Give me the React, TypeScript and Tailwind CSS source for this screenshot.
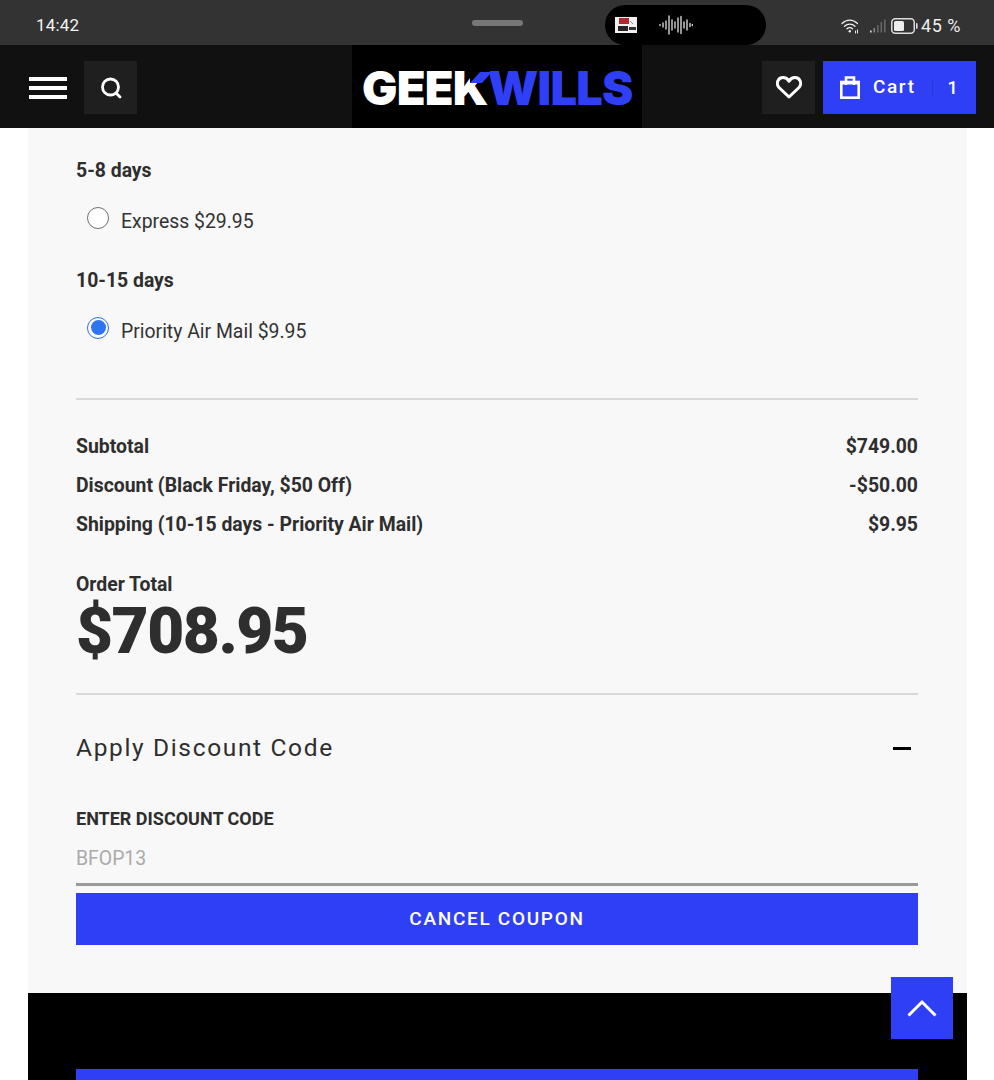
import React from "react";

const Row = ({ l, r }: { l: string; r: string }) => (
  <div className="flex h-[39px] items-center justify-between text-[19.4px] font-bold text-[#2e2e2e]">
    <span>{l}</span>
    <span>{r}</span>
  </div>
);

const Radio = ({ on, label }: { on?: boolean; label: string }) => (
  <div className="flex h-[24px] items-center pl-[11px]">
    <span
      className={
        on
          ? "flex h-[22px] w-[22px] items-center justify-center rounded-full border-[1.5px] border-[#2f6fe8] bg-white -mt-[9px]"
          : "h-[22px] w-[22px] rounded-full border-[1.5px] border-[#6f6f6f] bg-white -mt-[9px]"
      }
    >
      {on && <span className="h-[15px] w-[15px] rounded-full bg-[#2f74f0]" />}
    </span>
    <span className="ml-[12px] text-[19.4px] text-[#333]">{label}</span>
  </div>
);

export default function App() {
  return (
    <div className="relative h-[1080px] w-[994px] overflow-hidden bg-white font-['Roboto',sans-serif]">
      {/* status bar */}
      <div className="relative flex h-[45px] items-center justify-between bg-[#333333] pl-[36px] pr-[33px] pt-[6px] text-white">
        <span className="text-[17px] tracking-[0.2px] text-[#f2f2f2]">14:42</span>
        <div className="absolute left-[472px] top-[20px] h-[6px] w-[51px] rounded-full bg-[#777]" />
        <div className="absolute left-[605px] top-[5px] flex h-[40px] w-[161px] items-center rounded-full bg-black pl-[10px]">
          <svg width="22" height="16" viewBox="0 0 22 16">
            <rect width="22" height="16" fill="#f1f1f1" />
            <rect x="4" y="1" width="10" height="6" fill="#b3262c" />
            <rect x="3" y="9" width="10" height="5" fill="#2a2224" />
            <rect x="14" y="10" width="7" height="3" fill="#333" />
            <path d="M15 4l3 3" stroke="#6a8fc4" strokeWidth="1" />
          </svg>
          <svg className="ml-[22px]" width="34" height="20" viewBox="0 0 34 20" stroke="#e6e6e6" strokeWidth="1.3" strokeLinecap="round">
            <path d="M1 9.500v1M4 8v4M7 6v8M10 1v18M13 5v10M16 7v6M19 3v14M22 1.500v17M25 7v6M28 5v10M31 8.500v3M33.300 9.500v1" />
          </svg>
        </div>
        <div className="flex items-center">
          <svg width="18" height="16" viewBox="0 0 18 16" fill="none" stroke="#eee" strokeWidth="1.3" strokeLinecap="round">
            <path d="M1 5.500C5.500 1 12 1 16.500 5.500" />
            <path d="M3.500 8.200C6.500 5.300 11 5.300 14 8.200" />
            <path d="M6 10.800C7.500 9.400 10 9.400 11.500 10.800" />
            <circle cx="8.800" cy="13.300" r="1.200" fill="#eee" stroke="none" />
            <path d="M14.500 13v2M16.500 12v3" strokeWidth="1" />
          </svg>
          <svg className="ml-[11px]" width="16" height="14" viewBox="0 0 16 14" fill="#666">
            <rect x="0" y="11.500" width="1.600" height="2" fill="#ddd" />
            <rect x="3.500" y="9" width="1.600" height="4.500" fill="#888" />
            <rect x="7" y="6" width="1.600" height="7.500" />
            <rect x="10.500" y="3" width="1.600" height="10.500" />
            <rect x="14" y="0.500" width="1.600" height="13" />
          </svg>
          <svg className="ml-[5px]" width="27" height="16" viewBox="0 0 27 16" fill="none">
            <rect x="0.750" y="0.750" width="22.500" height="14.500" rx="3.500" stroke="#ddd" strokeWidth="1.500" />
            <rect x="3" y="3" width="10" height="10" rx="1.500" fill="#eee" />
            <rect x="25" y="5" width="1.600" height="6" rx="0.800" fill="#ddd" />
          </svg>
          <span className="ml-[3px] text-[18px] tracking-[0.5px] text-[#eee]">45 %</span>
        </div>
      </div>

      {/* header */}
      <header className="flex h-[83px] items-center justify-between bg-[#111111] pl-[29px] pr-[18px] pt-[2px]">
        <div className="flex items-center">
          <div className="flex w-[38px] flex-col gap-[5px]">
            <div className="h-[4px] bg-white" />
            <div className="h-[4px] bg-white" />
            <div className="h-[4px] bg-white" />
          </div>
          <button className="ml-[17px] flex h-[53px] w-[53px] items-center justify-center bg-[#1f1f1f]">
            <svg width="22" height="22" viewBox="0 0 22 22" fill="none" stroke="white" strokeWidth="2.800" strokeLinecap="round">
              <circle cx="10.500" cy="10" r="8" />
              <path d="M16.500 16.500l3.500 3.500" />
            </svg>
          </button>
        </div>
        <div className="absolute left-[352px] top-[45px] flex h-[83px] w-[290px] items-center bg-black pl-[10px] pt-[2px]">
          <div className="relative flex items-baseline text-[47px] leading-none font-black tracking-[-0.8px] font-['Inter',sans-serif]">
            <span className="text-white">GEEK</span>
            <span className="text-[#2f3ff5]">WILLS</span>
            <svg className="absolute left-[105px] top-[1px]" width="30" height="20" viewBox="0 0 30 20">
              <path d="M3 4h20v14H3z" fill="black" />
              <path d="M3 18 13 7h12L15 18z" fill="#2f3ff5" />
            </svg>
          </div>
        </div>
        <div className="flex items-center gap-[8px]">
          <button className="flex h-[53px] w-[53px] items-center justify-center bg-[#1f1f1f]">
            <svg width="26" height="23" viewBox="0 0 26 23" fill="none" stroke="white" strokeWidth="3" strokeLinejoin="round">
              <path d="M13 21 3 11.500C-.5 7.500 2 1.500 7 1.500c2.800 0 4.800 1.500 6 3.700 1.200-2.200 3.200-3.700 6-3.700 5 0 7.500 6 4 10z" />
            </svg>
          </button>
          <button className="flex h-[53px] w-[153px] items-center bg-[#2f3ff5] pl-[17px] text-white">
            <svg width="20" height="23" viewBox="0 0 20 23" fill="none" stroke="white" strokeWidth="2.600">
              <rect x="1.300" y="6" width="17.400" height="15.700" />
              <path d="M6 9V1.500h8V9" />
              <path d="M1.300 7h17.400" strokeWidth="3" />
            </svg>
            <span className="ml-[13px] text-[19px] font-medium tracking-[1.600px]">Cart</span>
            <span className="ml-[16px] h-[16px] w-px bg-[#2a37d0]" />
            <span className="ml-[15px] text-[18px] font-medium">1</span>
          </button>
        </div>
      </header>

      {/* main */}
      <main className="mx-[28px] flex h-[865px] w-[939px] flex-col bg-[#f8f8f8] pl-[48px] pr-[49px] pt-[30px]">
        <div className="text-[19.4px] leading-[26px] font-bold text-[#2e2e2e]">5-8 days</div>
        <div className="mt-[26px]"><Radio label="Express $29.95" /></div>
        <div className="mt-[34px] text-[19.4px] leading-[26px] font-bold text-[#2e2e2e]">10-15 days</div>
        <div className="mt-[26px]"><Radio on label="Priority Air Mail $9.95" /></div>
        <hr className="mt-[54px] border-t-[2px] border-[#d9d9d9]" />
        <div className="mt-[27px]">
          <Row l="Subtotal" r="$749.00" />
          <Row l="Discount (Black Friday, $50 Off)" r="-$50.00" />
          <Row l="Shipping (10-15 days - Priority Air Mail)" r="$9.95" />
        </div>
        <div className="mt-[28px] text-[19.4px] leading-[26px] font-bold text-[#2e2e2e]">Order Total</div>
        <div className="-mt-[2px] text-[64px] leading-[72px] font-black tracking-[-1.5px] text-[#2e2e2e]">$708.95</div>
        <hr className="mt-[25px] border-t-[2px] border-[#d9d9d9]" />
        <div className="mt-[33px] flex h-[40px] items-center justify-between pr-[7px]">
          <span className="text-[24.5px] tracking-[1.650px] text-[#2e2e2e]">Apply Discount Code</span>
          <span className="h-[3px] w-[18px] bg-black" />
        </div>
        <div className="mt-[39px] text-[18px] leading-[24px] font-bold text-[#2e2e2e]">ENTER DISCOUNT CODE</div>
        <div className="mt-[10px] flex h-[45px] items-center border-b-[3px] border-[#9a9a9a] pb-[7px] text-[19.4px] text-[#aaaaaa]">BFOP13</div>
        <button className="mt-[7px] h-[52px] bg-[#2f3ff5] text-[19px] font-medium tracking-[1.700px] text-white">CANCEL COUPON</button>
      </main>

      {/* footer */}
      <footer className="mx-[28px] h-[87px] w-[939px] bg-black pl-[48px] pr-[49px] pt-[76px]">
        <div className="h-[11px] bg-[#2f3ff5]" />
      </footer>

      {/* back to top */}
      <button className="absolute left-[891px] top-[977px] flex h-[62px] w-[62px] items-center justify-center bg-[#2f3ff5]">
        <svg width="30" height="18" viewBox="0 0 30 18" fill="none" stroke="white" strokeWidth="3">
          <path d="M1.500 16.500 15 3l13.500 13.500" />
        </svg>
      </button>
    </div>
  );
}
